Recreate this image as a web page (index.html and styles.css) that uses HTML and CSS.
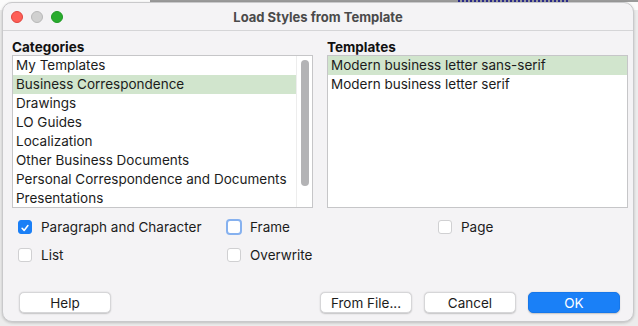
FILE: index.html
```html
<!DOCTYPE html>
<html>
<head>
<meta charset="utf-8">
<link rel="stylesheet" href="styles.css">
</head>
<body>
<div class="backdrop"><span class="bg-line"></span><span class="bg-link"></span></div>
<div class="window">
  <div class="titlebar">
    <div class="lights">
      <span class="dot red"></span><span class="dot gray"></span><span class="dot green"></span>
    </div>
    <div class="title">Load Styles from Template</div>
    <div></div>
  </div>
  <div class="content">
    <div class="panes">
      <div class="pane">
        <div class="label">Categories</div>
        <div class="listbox">
          <div class="items">
            <div class="item">My Templates</div>
            <div class="item sel">Business Correspondence</div>
            <div class="item">Drawings</div>
            <div class="item">LO Guides</div>
            <div class="item">Localization</div>
            <div class="item">Other Business Documents</div>
            <div class="item">Personal Correspondence and Documents</div>
            <div class="item">Presentations</div>
          </div>
          <div class="scrolltrack"><div class="thumb"></div></div>
        </div>
      </div>
      <div class="pane">
        <div class="label">Templates</div>
        <div class="listbox">
          <div class="items">
            <div class="item sel">Modern business letter sans-serif</div>
            <div class="item">Modern business letter serif</div>
          </div>
        </div>
      </div>
    </div>
    <div class="checks">
      <label class="check"><span class="box on"><svg viewBox="0 0 14 14" width="14" height="14"><path d="M3.6 7.3 L6 9.8 L10.4 4.2" fill="none" stroke="#fff" stroke-width="1.8" stroke-linecap="round" stroke-linejoin="round"/></svg></span>Paragraph and Character</label>
      <label class="check"><span class="box focus"></span>Frame</label>
      <label class="check"><span class="box"></span>Page</label>
      <label class="check"><span class="box"></span>List</label>
      <label class="check"><span class="box"></span>Overwrite</label>
    </div>
    <div class="buttons">
      <button class="btn help">Help</button>
      <div class="right">
        <button class="btn">From File...</button>
        <button class="btn">Cancel</button>
        <button class="btn primary">OK</button>
      </div>
    </div>
  </div>
</div>
</body>
</html>
```
FILE: styles.css
```css
html, body {
  margin: 0;
  padding: 0;
}
body {
  width: 638px;
  height: 326px;
  background: #ececec;
  font-family: Inter, "Liberation Sans", sans-serif;
  font-size: 13.5px;
  color: #1c1c1c;
  position: relative;
  overflow: hidden;
}
.backdrop {
  position: absolute;
  left: 0; top: 0; right: 0; height: 10px;
  background: #fbfbfb;
}
.bg-line {
  position: absolute;
  left: 150px; top: 0; width: 488px; height: 2px;
  background: #9a9a9a;
}
.bg-link {
  position: absolute;
  left: 458px; top: 0; width: 110px; height: 2px;
  border-top: 2px dotted #2a2a8c;
}
.window {
  position: relative;
  margin: 2px 0 0 2px;
  width: 630px;
  height: 318px;
  background: #f4f3f5;
  border: 1px solid #c9c9cb;
  border-radius: 10px;
  box-shadow: 0 1px 3px rgba(0,0,0,0.2);
  display: flex;
  flex-direction: column;
}
.titlebar {
  height: 27px;
  border-bottom: 1px solid #d5d5d7;
  display: grid;
  grid-template-columns: 1fr auto 1fr;
  align-items: center;
}
.lights {
  display: flex;
  gap: 8px;
  padding-left: 8px;
}
.dot {
  width: 12px;
  height: 12px;
  border-radius: 50%;
  box-sizing: border-box;
}
.red { background: #fe5f57; border: 0.5px solid #e0443e; }
.gray { background: #d0d0d0; border: 0.5px solid #b8b8b8; }
.green { background: #2aac2f; border: 0.5px solid #1f9a24; }
.title {
  font-weight: 700;
  color: #4a4a4a;
  font-size: 13px;
}
.content {
  padding: 8px 0 0 9px;
  display: flex;
  flex-direction: column;
}
.panes {
  display: grid;
  grid-template-columns: 301px 301px;
  column-gap: 14px;
}
.label {
  font-weight: 700;
  font-size: 13.5px;
  line-height: 16px;
  height: 16px;
  color: #111;
}
.listbox {
  height: 151px;
  border: 1px solid #c6c6c8;
  background: #fff;
  display: flex;
  overflow: hidden;
}
.items {
  flex: 1;
}
.item {
  height: 19px;
  line-height: 19px;
  padding-left: 3px;
  white-space: nowrap;
}
.item.sel {
  background: #d1e5cd;
}
.scrolltrack {
  width: 15px;
  border-left: 1px solid #ededed;
  display: flex;
  justify-content: center;
  padding-top: 4px;
}
.thumb {
  width: 8px;
  height: 126px;
  border-radius: 4px;
  background: #b3b3b5;
}
.checks {
  display: grid;
  grid-template-columns: 209px 211px auto;
  grid-auto-rows: 28px;
  padding: 5px 0 0 6px;
}
.check {
  display: flex;
  align-items: center;
  gap: 9px;
}
.box {
  width: 14px;
  height: 14px;
  box-sizing: border-box;
  border: 1px solid #d0d0d2;
  border-radius: 3px;
  background: #fff;
  display: flex;
}
.box.on {
  background: #1a7ff6;
  border-color: #1a7ff6;
}
.box.focus {
  width: 16px;
  height: 16px;
  margin: 0 -1px;
  border: 2px solid #86b1ef;
  border-radius: 4px;
}
.buttons {
  display: flex;
  justify-content: space-between;
  padding: 23px 13px 0 7px;
}
.right {
  display: flex;
  gap: 12px;
}
.btn {
  width: 92px;
  height: 21px;
  font-family: Inter, "Liberation Sans", sans-serif;
  font-size: 13.5px;
  color: #1c1c1c;
  background: #fff;
  border: 0.5px solid #d6d6d8;
  border-radius: 5px;
  box-shadow: 0 0.5px 1.5px rgba(0,0,0,0.2);
  padding: 0;
}
.btn.primary {
  background: #1a80f7;
  border-color: #1677ea;
  color: #fff;
}
```
